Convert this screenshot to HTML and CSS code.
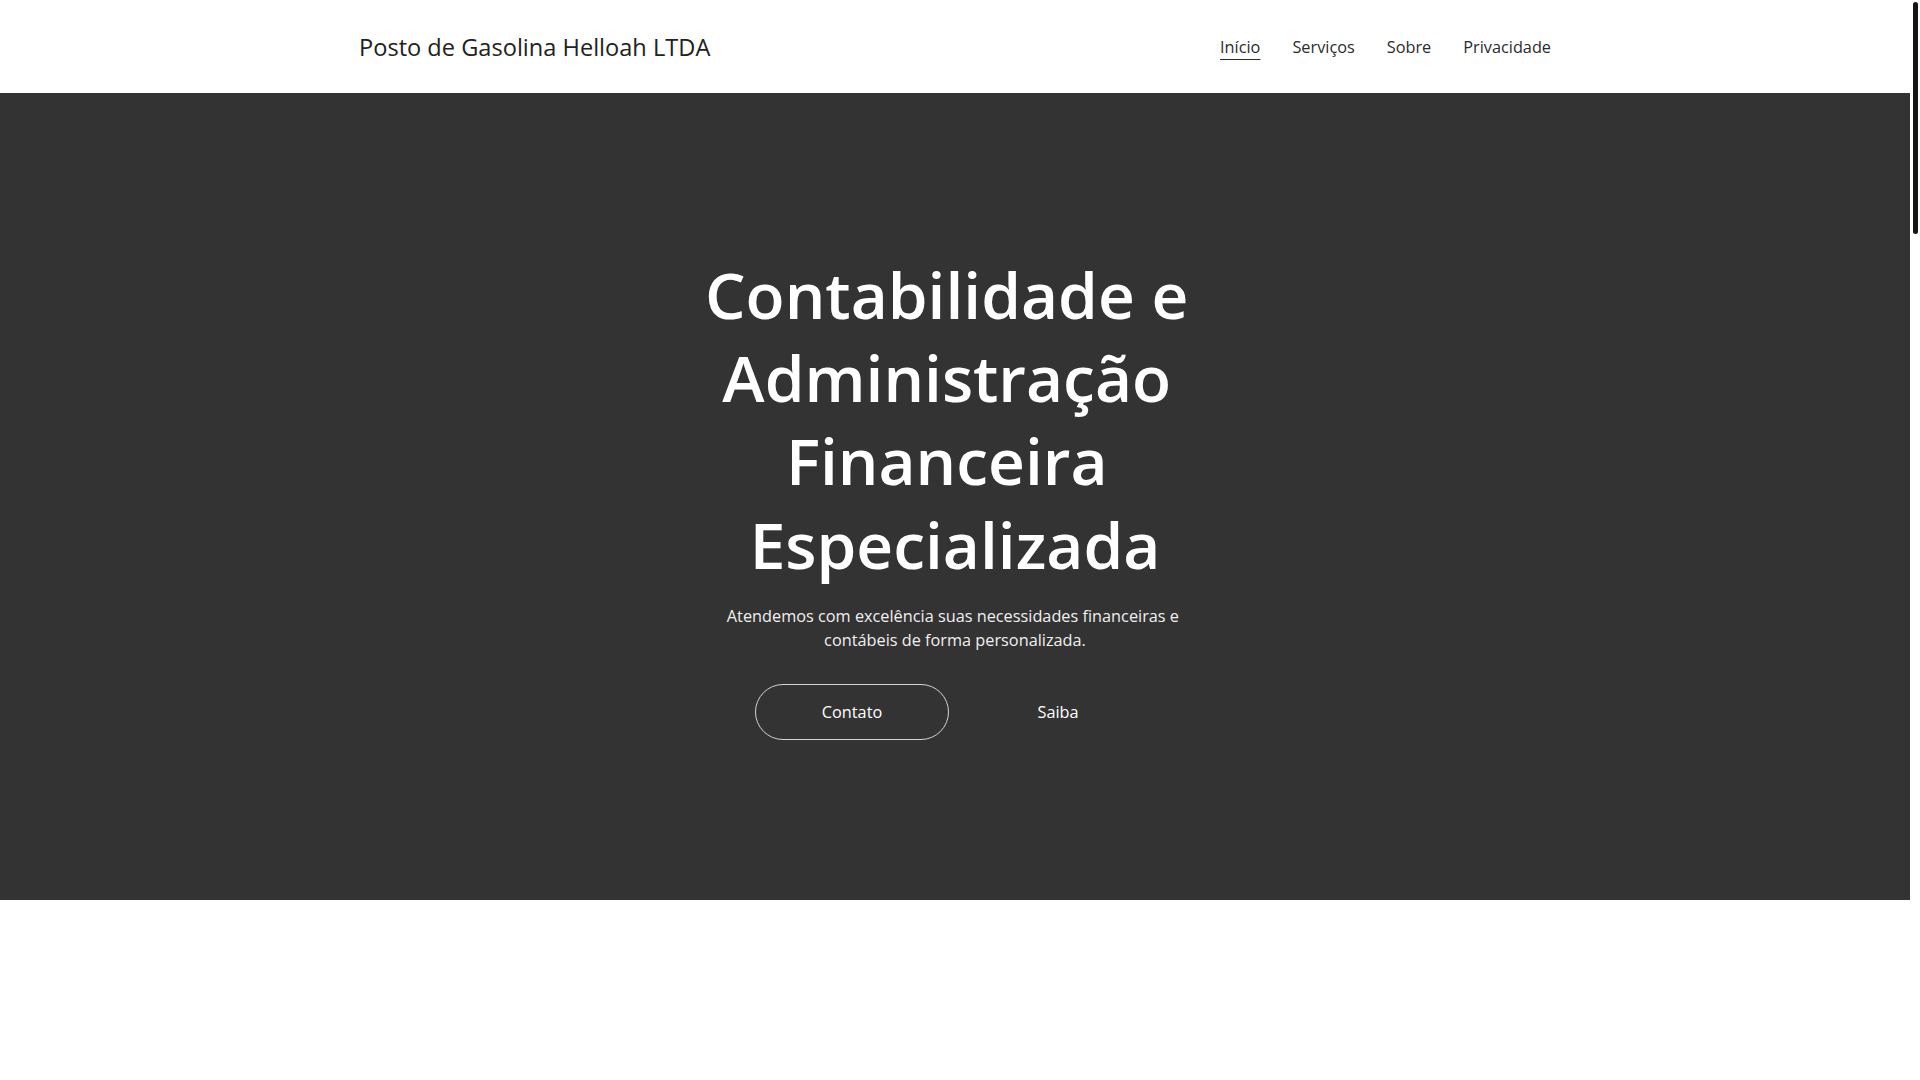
FILE: index.html
```html
<!DOCTYPE html>
<html lang="pt-BR">
<head>
<meta charset="utf-8">
<title>Posto de Gasolina Helloah LTDA</title>
<link rel="stylesheet" href="styles.css">
</head>
<body>
<div class="page">
  <header class="site-header">
    <div class="container header-inner">
      <a class="brand" href="#">Posto de Gasolina Helloah LTDA</a>
      <nav class="main-nav">
        <a class="nav-link active" href="#">Início</a>
        <a class="nav-link" href="#servicos">Serviços</a>
        <a class="nav-link" href="#sobre">Sobre</a>
        <a class="nav-link" href="#privacidade">Privacidade</a>
      </nav>
    </div>
  </header>

  <section class="hero">
    <div class="hero-content">
      <h1 class="hero-title">Contabilidade e Administração Financeira Especializada</h1>
      <p class="hero-text">Atendemos com excelência suas necessidades financeiras e contábeis de forma personalizada.</p>
      <div class="hero-actions">
        <a class="btn btn-outline" href="#contato">Contato</a>
        <a class="btn btn-plain" href="#sobre">Saiba</a>
      </div>
    </div>
  </section>
</div>
<div class="scroll-rail" aria-hidden="true"><div class="scroll-thumb"></div></div>
</body>
</html>
```

FILE: styles.css
```css
* { box-sizing: border-box; }

html, body {
  margin: 0;
  padding: 0;
}

body {
  display: flex;
  min-height: 100vh;
  font-family: "Open Sans", "Noto Sans", "Liberation Sans", sans-serif;
  color: #333333;
  background: #ffffff;
  font-size: 16.3px;
  line-height: 1.5;
  overflow: hidden;
}

.page {
  flex: 1 1 auto;
  min-width: 0;
}

.scroll-rail {
  flex: 0 0 10px;
  background: #ffffff;
  padding: 2px 2px 0 3px;
}

.scroll-thumb {
  width: 5px;
  height: 232px;
  border-radius: 3px;
  background: #141414;
}

a { text-decoration: none; color: inherit; }

.container {
  width: 1192px;
  margin: 0 auto;
}

.site-header {
  height: 93px;
  background: #ffffff;
}

.header-inner {
  height: 100%;
  display: flex;
  align-items: center;
  justify-content: space-between;
}

.brand {
  font-size: 23.6px;
  line-height: 36px;
  color: #222222;
}

.main-nav {
  display: flex;
  gap: 32px;
  align-items: center;
}

.nav-link {
  font-size: 16.3px;
  line-height: 24px;
  color: #2b2b2b;
}

.nav-link.active {
  text-decoration: underline;
  text-decoration-thickness: 1px;
  text-underline-offset: 6px;
}

.hero {
  background: #333333;
  color: #ffffff;
  padding: 160px 0 160px;
  display: flex;
  justify-content: center;
}

.hero-content {
  width: 500px;
  text-align: center;
}

.hero-title {
  margin: 0 0 18px;
  font-size: 64px;
  line-height: 83.2px;
  font-weight: 600;
  white-space: break-spaces;
}

.hero-text {
  margin: 0;
  font-size: 16.3px;
  line-height: 24px;
  color: #f0f0f0;
  white-space: break-spaces;
}

.hero-actions {
  margin-top: 32px;
  display: flex;
  justify-content: center;
  gap: 12px;
}

.btn {
  width: 194px;
  height: 56px;
  border-radius: 28px;
  display: flex;
  align-items: center;
  justify-content: center;
  font-size: 16.3px;
  color: #ffffff;
  border: 1px solid transparent;
}

.btn-outline {
  border-color: #d4d4d4;
}
```
